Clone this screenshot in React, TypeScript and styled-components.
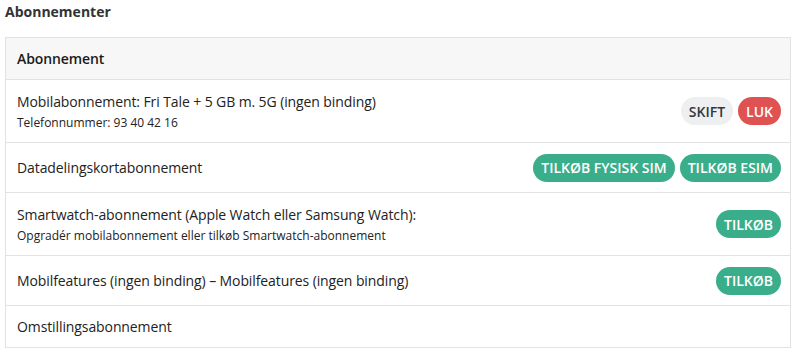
import React from "react";
import styled, { createGlobalStyle } from "styled-components";

const Global = createGlobalStyle`
  html, body { margin: 0; padding: 0; background: #fff; }
  body { font-family: "Open Sans", "Noto Sans", sans-serif; color: #222; }
`;

const Page = styled.div`
  padding: 2px 7px 0 5px;
`;

const Title = styled.h2`
  margin: 0 0 15px 0;
  font-size: 14px;
  line-height: 20px;
  font-weight: 700;
  color: #333;
`;

const Card = styled.div`
  border: 1px solid #e2e2e2;
  display: flex;
  flex-direction: column;
`;

const Header = styled.div`
  background: #f7f7f7;
  border-bottom: 1px solid #e2e2e2;
  padding: 0 11px;
  height: 41px;
  display: flex;
  align-items: center;
  font-size: 14px;
  letter-spacing: -0.1px;
  font-weight: 600;
  color: #1a1a1a;
`;

const Row = styled.div<{ $h: number; $last?: boolean }>`
  display: flex;
  align-items: center;
  justify-content: space-between;
  height: ${(p) => p.$h}px;
  padding: 0 9px 0 11px;
  border-bottom: ${(p) => (p.$last ? "none" : "1px solid #e2e2e2")};
  box-sizing: border-box;
`;

const Info = styled.div`
  display: flex;
  flex-direction: column;
  gap: 2px;
`;

const Main = styled.div`
  font-size: 14px;
  letter-spacing: -0.1px;
  line-height: 20px;
  color: #222;
`;

const Sub = styled.div`
  font-size: 12px;
  line-height: 17px;
  color: #222;
`;

const Actions = styled.div`
  display: flex;
  gap: 5px;
`;

const variants = {
  grey: { bg: "#eeeff1", fg: "#33383d" },
  red: { bg: "#e05252", fg: "#fff" },
  green: { bg: "#3aae8b", fg: "#fff" },
};

const Btn = styled.button<{ $v: keyof typeof variants }>`
  border: none;
  border-radius: 14px;
  height: 28px;
  padding: 0 8px;
  font-family: "Open Sans", "Noto Sans", sans-serif;
  font-weight: 600;
  font-size: 14px;
  background: ${(p) => variants[p.$v].bg};
  color: ${(p) => variants[p.$v].fg};
  cursor: pointer;
`;

export default function App() {
  return (
    <>
      <Global />
      <Page>
        <Title>Abonnementer</Title>
        <Card>
          <Header>Abonnement</Header>
          <Row $h={63}>
            <Info>
              <Main>Mobilabonnement: Fri Tale + 5 GB m. 5G (ingen binding)</Main>
              <Sub>Telefonnummer: 93 40 42 16</Sub>
            </Info>
            <Actions>
              <Btn $v="grey">SKIFT</Btn>
              <Btn $v="red">LUK</Btn>
            </Actions>
          </Row>
          <Row $h={50}>
            <Info>
              <Main>Datadelingskortabonnement</Main>
            </Info>
            <Actions>
              <Btn $v="green">TILKØB FYSISK SIM</Btn>
              <Btn $v="green">TILKØB ESIM</Btn>
            </Actions>
          </Row>
          <Row $h={63}>
            <Info>
              <Main>Smartwatch-abonnement (Apple Watch eller Samsung Watch):</Main>
              <Sub>Opgradér mobilabonnement eller tilkøb Smartwatch-abonnement</Sub>
            </Info>
            <Actions>
              <Btn $v="green">TILKØB</Btn>
            </Actions>
          </Row>
          <Row $h={50}>
            <Info>
              <Main>Mobilfeatures (ingen binding) – Mobilfeatures (ingen binding)</Main>
            </Info>
            <Actions>
              <Btn $v="green">TILKØB</Btn>
            </Actions>
          </Row>
          <Row $h={41} $last>
            <Info>
              <Main>Omstillingsabonnement</Main>
            </Info>
          </Row>
        </Card>
      </Page>
    </>
  );
}
